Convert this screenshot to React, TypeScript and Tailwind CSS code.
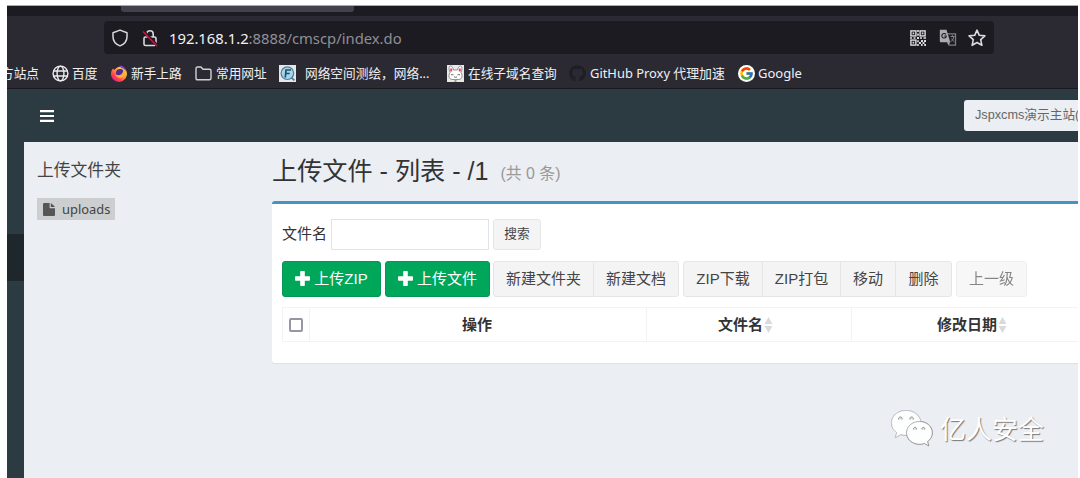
import type { ReactNode } from "react";
import { FaGithub } from "react-icons/fa";
import { FcGoogle } from "react-icons/fc";

const UI_FONT = "font-['Noto_Sans','Noto_Sans_CJK_SC',sans-serif]";
const APP_FONT = "font-['Liberation_Sans','Noto_Sans_CJK_SC',sans-serif]";

function ShieldIcon() {
  return (
    <svg width="16" height="18" viewBox="0 0 16 18" fill="none" stroke="#d8d8dc" strokeWidth="1.5" strokeLinejoin="round">
      <path d="M8 1.1 15 3.8v3.9c0 4.2-2.6 7.4-7 9.2C3.6 15.1 1 11.9 1 7.7V3.8Z" />
    </svg>
  );
}

function InsecureLockIcon() {
  return (
    <svg width="16" height="18" viewBox="0 0 16 18" fill="none" stroke="#d8d8dc" strokeWidth="1.6">
      <path d="M4.8 8V5a3.2 3.2 0 0 1 6.400 0v3" />
      <rect x="2" y="8" width="12" height="8.500" rx="1.500" />
      <path d="M1.800 2.500 15.200 16.500" stroke="#1c1b22" strokeWidth="3" />
      <path d="M1 2.500 15 17" stroke="#d3123d" strokeWidth="1.600" />
    </svg>
  );
}

function QrIcon() {
  return (
    <svg width="16" height="16" viewBox="0 0 16 16" fill="#dcdce0">
      <g fill="none" stroke="#dcdce0" strokeWidth="1.400">
        <rect x=".9" y=".9" width="5" height="5" />
        <rect x="10.100" y=".9" width="5" height="5" />
        <rect x=".9" y="10.100" width="5" height="5" />
      </g>
      <path d="M2.600 2.600h1.600v1.600H2.600zM11.800 2.600h1.600v1.600h-1.600zM2.600 11.800h1.600v1.600H2.600zM7.200 0h1.600v2H7.200zM7.200 3.500h1.600v2.300H7.200zM0 7.200h2v1.600H0zM3.500 7.200h2v1.600h-2zM7 7h2v2H7zM10 7.200h2v1.600h-2zM13.500 7.200H16v1.600h-2.500zM7.200 10.200h1.600v2H7.200zM9 12h2v2H9zM11 10h2v2h-2zM14 10h2v2h-2zM12.500 12h2v2h-2zM7.200 14h1.600v2H7.200zM11 14h1.600v2H11zM14.200 14H16v2h-1.800z" />
    </svg>
  );
}

function TranslateIcon() {
  return (
    <svg width="18" height="18" viewBox="0 0 18 18">
      <path d="M8 4.800h8.500v11.400H9.500" fill="none" stroke="#7f7f86" strokeWidth="1.300" />
      <path d="M1 .8h6.500l3.800 12.400H1.800a1 1 0 0 1-1-1V1.600Q.8.800 1 .8Z" fill="#aaaaaf" />
      <path d="M7.800 13.200h3.500l-1.800 3Z" fill="#aaaaaf" />
      <path d="M7 5.400A2.300 2.300 0 1 0 7.200 7.800V7H5.300" fill="none" stroke="#1c1b22" strokeWidth="1.100" />
      <path d="M11.500 7.500h4M13.500 6.300v1.200M15 7.500q-.8 3.500-3 5.200M12.700 9.500q.8 2 2.500 3.200" fill="none" stroke="#85858b" />
    </svg>
  );
}

function StarIcon() {
  return (
    <svg width="18" height="18" viewBox="0 0 18 18" fill="none" stroke="#dcdce0" strokeWidth="1.600" strokeLinejoin="round">
      <path d="m9 1.200 2.300 5.100 5.600.6-4.200 3.700 1.200 5.700L9 13.500l-4.900 2.800 1.200-5.700-4.200-3.700 5.600-.6Z" />
    </svg>
  );
}

function GlobeIcon() {
  return (
    <svg width="17" height="17" viewBox="0 0 17 17" fill="none" stroke="#ececef" strokeWidth="1.400">
      <circle cx="8.500" cy="8.500" r="7.400" />
      <ellipse cx="8.500" cy="8.500" rx="3.400" ry="7.400" />
      <path d="M1.500 6h14M1.500 11h14" />
    </svg>
  );
}

function FirefoxIcon() {
  return (
    <svg width="17" height="17" viewBox="0 0 17 17">
      <defs>
        <linearGradient id="fox" x1=".9" y1=".1" x2=".2" y2=".9">
          <stop offset="0" stopColor="#ffe14a" />
          <stop offset=".45" stopColor="#ff9838" />
          <stop offset=".75" stopColor="#ff4450" />
          <stop offset="1" stopColor="#ec2084" />
        </linearGradient>
      </defs>
      <path d="M2 3.500 3.200 5l2-1.700A7.500 7.500 0 0 1 11 2l3.800 2.800A8 8 0 1 1 2 3.500Z" fill="url(#fox)" />
      <circle cx="9" cy="8" r="4" fill="#4b2c91" />
      <path d="M8 .8c4-.8 6.500 2 6.900 6.200-1-2.400-2.400-3.500-4.400-3.700Z" fill="#8d45dc" />
      <path d="M12 3.500c3.200 2.500 2.700 7.500-1 9-3 1.200-6.500-.6-6.700-3.500 2 1.800 5.200 1.600 6.700-.5 1.200-1.700 1.300-3.300 1-5Z" fill="#ffad35" />
    </svg>
  );
}

function FolderIcon() {
  return (
    <svg width="17" height="15" viewBox="0 0 17 15" fill="none" stroke="#d0d0d5" strokeWidth="1.400" strokeLinejoin="round">
      <path d="M1 2.500Q1 1 2.500 1H6l2 2.300h6.500q1.500 0 1.500 1.500v7.500q0 1.500-1.500 1.500h-12Q1 13.800 1 12.300Z" />
    </svg>
  );
}

function FofaIcon() {
  return (
    <svg width="17" height="17" viewBox="0 0 17 17">
      <path d="M0 0h17v17H0Z" fill="#e4e8e9" />
      <circle cx="8.400" cy="8.200" r="6.300" fill="#a8d5ea" stroke="#467f9c" strokeWidth="1.200" />
      <path d="m12.300 12.300 3 3" stroke="#467f9c" strokeWidth="1.700" />
      <path d="M6.300 12.500 7 5h5M6.700 8.500h4" fill="none" stroke="#234e6b" strokeWidth="1.700" />
    </svg>
  );
}

function RabbitIcon() {
  return (
    <svg width="17" height="17" viewBox="0 0 17 17">
      <path d="M0 0h17v17H0Z" fill="#e9e8e5" />
      <path d="M3 7.500C1.500 4 2 1 3.500 1S6 3 6.500 5h4C11 3 12 1 13.500 1s2 3 .5 6.500c2 3.500 1 6.500-2 7H5c-3-.5-4-3.500-2-7Z" fill="#fff" stroke="#77777c" strokeWidth=".8" />
      <path d="M4.200 3.500v3M12.800 3.500v3" stroke="#d74e76" strokeWidth="2" />
      <path d="M4 9.700h2.500M10.500 9.700H13M7 11.800q1.500 1 3 0" fill="none" stroke="#6d6d70" />
      <path d="M7.500 14.200h2V17h-2Z" fill="#a1a17b" />
    </svg>
  );
}

function MenuIcon() {
  return (
    <svg width="14" height="12" viewBox="0 0 14 12" fill="#fff">
      <path d="M0 0h14v2.200H0ZM0 4.900h14v2.200H0ZM0 9.800h14V12H0Z" />
    </svg>
  );
}

function FileIcon() {
  return (
    <svg width="12" height="13" viewBox="0 0 12 13" fill="#555">
      <path d="M1 0h5.600v4.600q0 .6.600.6H12V12q0 1-1 1H1q-1 0-1-1V1Q0 0 1 0ZM7.800.2q.6.200 1 .6l2.400 2.200q.4.400.6 1H7.800Z" />
    </svg>
  );
}

function PlusIcon() {
  return (
    <svg width="15" height="15" viewBox="0 0 15 15" fill="#fff">
      <path d="M6 0h3q.8 0 .8.8v4.400h4.400q.8 0 .8.800v3q0 .8-.8.8H9.800v4.400q0 .8-.8.8H6q-.8 0-.8-.8V9.800H.8Q0 9.800 0 9V6q0-.8.8-.8h4.400V.8Q5.200 0 6 0Z" />
    </svg>
  );
}

function WechatIcon() {
  return (
    <svg width="44" height="38" viewBox="0 0 44 38" fill="#fdfefe" stroke="#8b8d8f" strokeWidth=".7">
      <g className="[filter:drop-shadow(0.6px_0.8px_0.5px_#888)]">
        <path stroke="#c4c6c9" d="M16 1.500C7.500 1.500 1.500 7 1.500 14c0 4 2 7.300 5.300 9.600l-1.500 5 5.500-3c9.500 2.500 20-2 20-11.600 0-7-6.300-12.500-14.800-12.500Z" />
        <path d="M29.500 12.500c-7.500 0-13 5-13 11.300 0 6.500 6 11.500 13 11.500 1.600 0 3.300-.3 4.800-.9l4.500 2.500-1.300-4.300c3-2.100 4.800-5.200 4.800-8.800 0-6.300-5.500-11.300-12.800-11.300Z" />
      </g>
      <g fill="#e0e2e5" strokeWidth="1">
        <path d="M8.700 10.500a1.800 1.800 0 1 1 3.300 0M20 10.500a1.800 1.800 0 1 1 3.300 0M23.700 20.500a1.500 1.500 0 1 1 2.700 0M32 20.500a1.500 1.500 0 1 1 2.700 0" />
      </g>
    </svg>
  );
}

function Bookmark({ icon, label, className = "" }: { icon: ReactNode; label: string; className?: string }) {
  return (
    <div className={`flex shrink-0 items-center ${className}`}>
      <span className="flex w-[17px] shrink-0 justify-center">{icon}</span>
      <span className="whitespace-nowrap">{label}</span>
    </div>
  );
}

function ToolButton({ label, className }: { label: string; className: string }) {
  return (
    <button className={`h-9 shrink-0 border border-[#e6e6e6] bg-[#f4f4f4] pb-[2px] text-center whitespace-nowrap text-[#444] ${className}`}>
      {label}
    </button>
  );
}

function UploadButton({ label, className }: { label: string; className: string }) {
  return (
    <button
      className={`flex h-9 shrink-0 items-center justify-center gap-1 rounded-[3px] border border-[#079653] bg-[#00a65a] pb-[2px] whitespace-nowrap text-white ${className}`}
    >
      <PlusIcon />
      {label}
    </button>
  );
}

function SortIcon() {
  return (
    <svg width="9" height="16" viewBox="0 0 9 16" fill="#dadada">
      <path d="M4.500 0 8.500 7h-8ZM.5 9h8l-4 7Z" />
    </svg>
  );
}

function BrowserChrome() {
  return (
    <div className={`bg-[#2b2a33] ${UI_FONT}`}>
      <div className="h-[10px] bg-[#1c1b22]">
        <div className="ml-[114px] h-[6px] w-[233px] rounded-b-[3px] bg-[#42414d]" />
      </div>
      <div className="h-[38px] pt-[5px] pl-[97px]">
        <div className="flex h-[33px] w-[890px] items-center rounded-[4px] bg-[#1c1b22] pl-2">
          <ShieldIcon />
          <span className="ml-[14px]"><InsecureLockIcon /></span>
          <div className="mt-px ml-[11px] text-[14.800px] leading-none whitespace-nowrap text-[#8f8f96]">
            <span className="text-[#f2f2f5]">192.168.1.2</span>:8888/cmscp/index.do
          </div>
          <div className="mr-2 ml-auto flex items-center">
            <QrIcon />
            <span className="ml-[13px]"><TranslateIcon /></span>
            <span className="ml-[11px]"><StarIcon /></span>
          </div>
        </div>
      </div>
      <div className="flex h-[35px] items-center overflow-hidden border-b border-[#1a191f] pt-[4px] text-[12.700px] leading-none text-[#f0f0f3]">
        <span className="-ml-[6px] w-[38px] shrink-0 whitespace-nowrap">方站点</span>
        <Bookmark icon={<GlobeIcon />} label="百度" className="ml-[13px] w-[59px] gap-[3px]" />
        <Bookmark icon={<FirefoxIcon />} label="新手上路" className="w-[84px] gap-[3px]" />
        <Bookmark icon={<FolderIcon />} label="常用网址" className="w-[84px] gap-[4px]" />
        <Bookmark icon={<FofaIcon />} label="网络空间测绘，网络..." className="w-[168px] gap-[9px]" />
        <Bookmark icon={<RabbitIcon />} label="在线子域名查询" className="w-[122px] gap-[4px]" />
        <Bookmark icon={<FaGithub size={17} color="#1d1f24" />} label="GitHub Proxy 代理加速" className="w-[169px] gap-[4px] text-[12.900px]" />
        <Bookmark
          icon={<span className="flex size-[17px] items-center justify-center rounded-full bg-white"><FcGoogle size={15} /></span>}
          label="Google"
          className="gap-[3px] text-[13px]"
        />
      </div>
    </div>
  );
}

function FileList() {
  return (
    <main className="flex-1 pt-[15px]">
      <h1 className="flex h-[29px] items-center text-[25.150px] leading-none whitespace-nowrap text-[#333]">
        上传文件 - 列表 - /1
        <small className="mt-[5px] ml-3 text-[15.900px] text-[#999]">(共 0 条)</small>
      </h1>
      <section className="mt-[15px] h-[162px] rounded-l-[3px] border-t-[3px] border-[#4494c1] bg-white pl-[10px] shadow-[0_1px_1px_rgba(0,0,0,0.06)]">
        <div className="flex items-center pt-[15px]">
          <label className="w-[49px] pb-[3px] text-[15px] leading-none text-[#333]">文件名</label>
          <input aria-label="文件名" className="h-[31px] w-[158px] border border-[#dfe3ea] bg-white" />
          <button className="ml-1 h-[31px] w-[48px] rounded-[3px] border border-[#e6e6e6] bg-[#f4f4f4] text-[12.700px] leading-none text-[#444]">
            搜索
          </button>
        </div>
        <div className="mt-[11px] flex text-[15px] leading-none">
          <UploadButton label="上传ZIP" className="w-[99px]" />
          <UploadButton label="上传文件" className="ml-1 w-[105px]" />
          <ToolButton label="新建文件夹" className="ml-[3px] w-[101px] rounded-l-[3px]" />
          <ToolButton label="新建文档" className="-ml-px w-[86px] rounded-r-[3px]" />
          <ToolButton label="ZIP下载" className="ml-1 w-[80px] rounded-l-[3px]" />
          <ToolButton label="ZIP打包" className="-ml-px w-[79px]" />
          <ToolButton label="移动" className="-ml-px w-[56px]" />
          <ToolButton label="删除" className="-ml-px w-[57px] rounded-r-[3px]" />
          <ToolButton label="上一级" className="ml-1 w-[71px] rounded-[3px] opacity-65" />
        </div>
        <div className="mt-[10px] flex h-[35px] border border-r-0 border-[#f3f3f3] text-[15px] leading-none font-bold text-[#333]">
          <div className="flex w-[27px] shrink-0 items-center justify-center border-r border-[#f3f3f3]">
            <span className="size-[14px] rounded-[2px] border-2 border-[#9695a3] bg-white" />
          </div>
          <div className="flex w-[337px] shrink-0 items-center justify-center border-r border-[#f3f3f3] pr-[2px]">操作</div>
          <div className="flex w-[205px] shrink-0 items-center justify-center gap-px border-r border-[#f3f3f3] pr-[7px]">
            文件名<SortIcon />
          </div>
          <div className="flex flex-1 items-center gap-px pl-[85px]">
            修改日期<SortIcon />
          </div>
        </div>
      </section>
    </main>
  );
}

export default function App() {
  return (
    <div className="h-[478px] w-[1080px] overflow-hidden bg-white pt-[6px] pr-[2px] pl-[7px]">
      <div className="relative flex h-[472px] flex-col overflow-hidden bg-[#2c3b41] shadow-[0_-1px_0_#aaa]">
        <BrowserChrome />
        <header className={`flex h-[53px] shrink-0 items-center justify-between pl-[33px] ${APP_FONT}`}>
          <MenuIcon />
          <div className="flex h-[31px] w-[114px] items-center overflow-hidden rounded-l-[3px] bg-[#ebeef3] pl-[11px] text-[12.700px] whitespace-nowrap text-[#666]">
            Jspxcms演示主站(
          </div>
        </header>
        <div className={`flex min-h-0 flex-1 ${APP_FONT}`}>
          <div className="w-[17px] shrink-0 pt-[92px]">
            <div className="h-[47px] bg-[#1e282c]" />
          </div>
          <div className="flex flex-1 bg-[#ebeef3]">
            <aside className="w-[248px] shrink-0 pt-[20px] pl-[13px]">
              <h2 className="text-[16.800px] leading-[18px] text-[#444]">上传文件夹</h2>
              <div className={`mt-[18px] flex h-[22px] w-[78px] items-center gap-[7px] bg-[#cdced0] pl-[6px] text-[12.900px] leading-none text-[#444] ${UI_FONT}`}>
                <FileIcon />uploads
              </div>
            </aside>
            <FileList />
          </div>
        </div>
        <div className="absolute top-[403px] left-[883px] flex items-center gap-[6px] font-['Noto_Sans_CJK_SC',sans-serif] text-[26px] leading-none whitespace-nowrap text-white [text-shadow:1px_1px_1px_#777]">
          <WechatIcon />亿人安全
        </div>
      </div>
    </div>
  );
}
